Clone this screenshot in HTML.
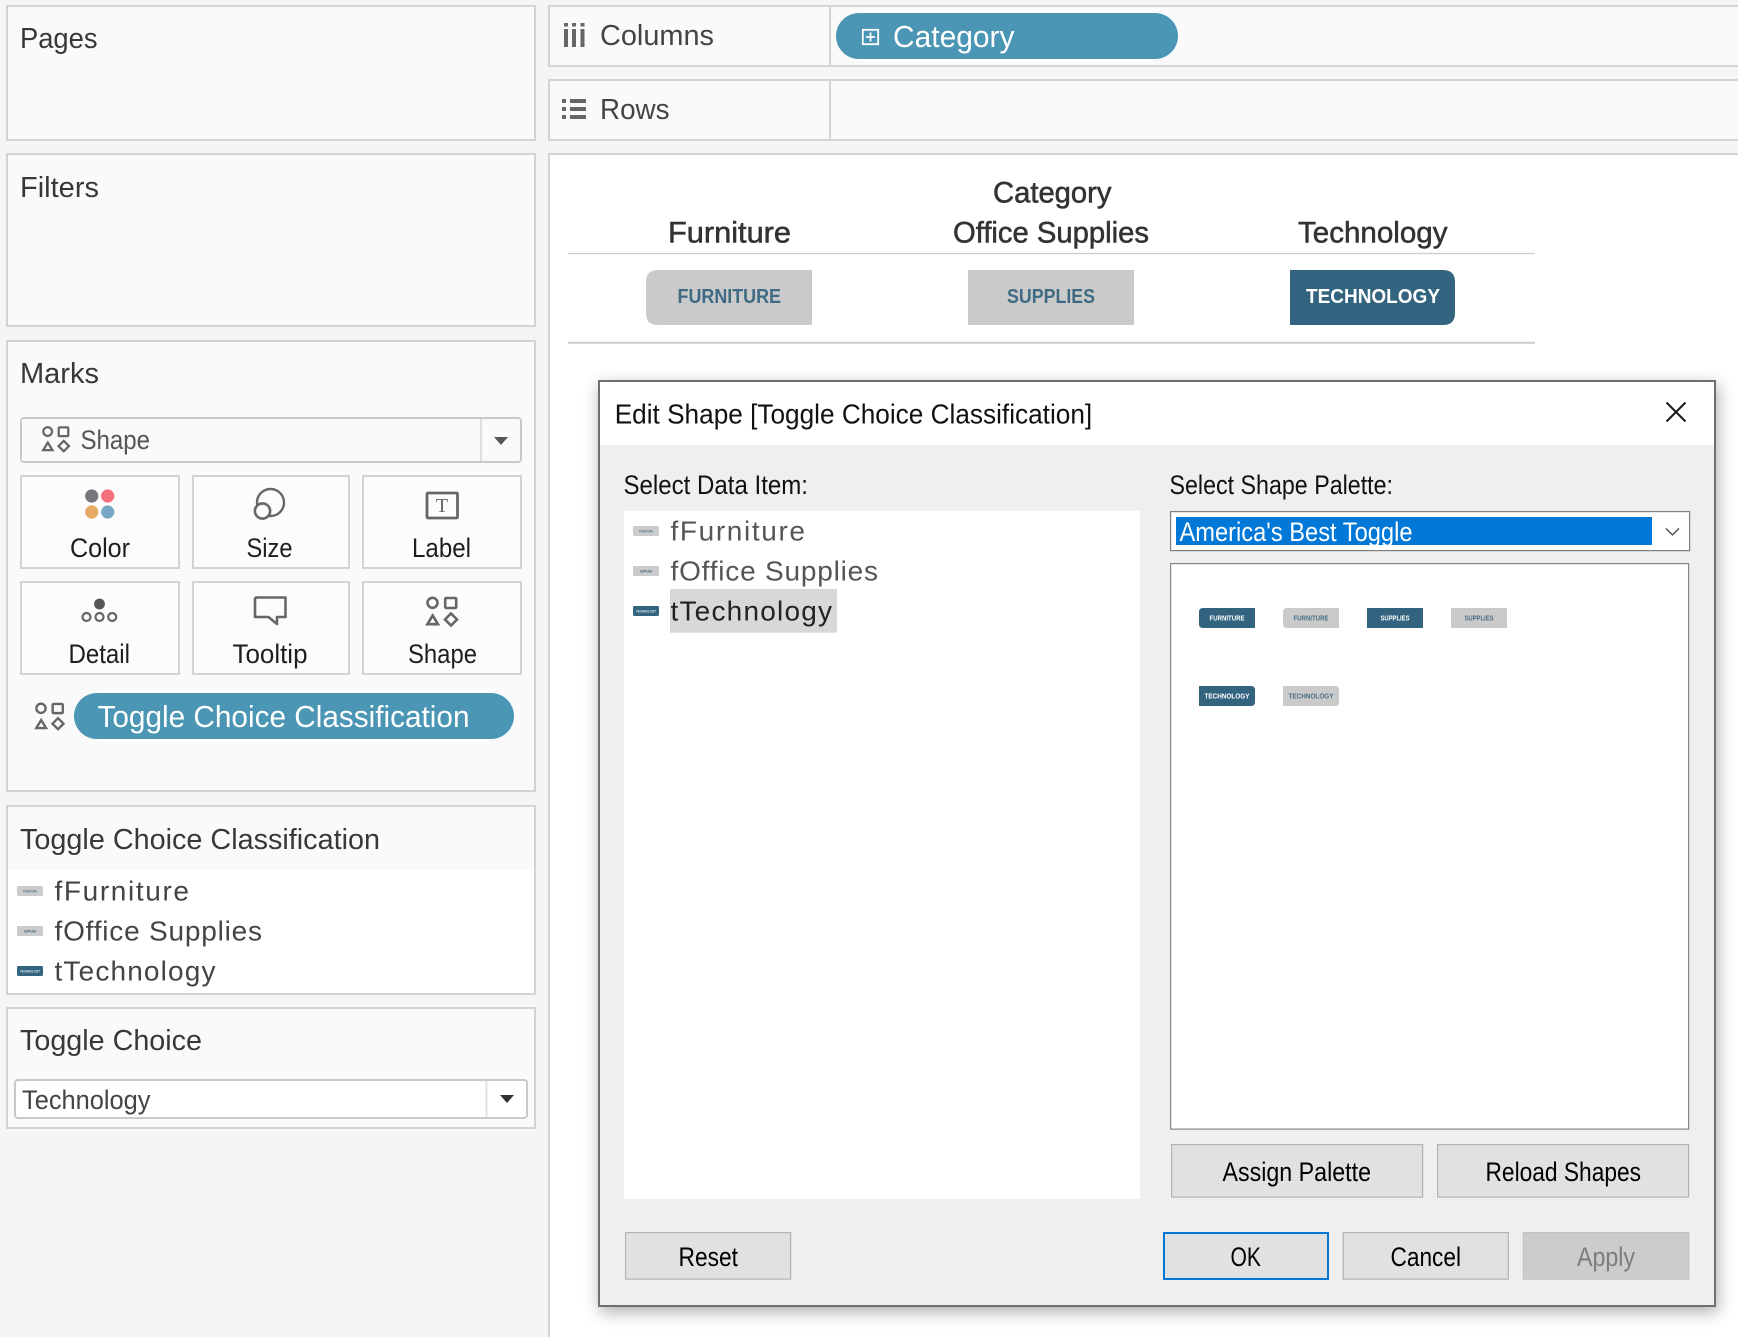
<!DOCTYPE html>
<html><head><meta charset="utf-8"><style>
html,body{margin:0;padding:0;background:#f5f5f5}
svg{display:block;font-family:"Liberation Sans",sans-serif}
text{white-space:pre}
</style></head><body>
<svg width="1738" height="1337" viewBox="0 0 1738 1337" xmlns="http://www.w3.org/2000/svg">
<defs>
<g id="shp" fill="none" stroke="#666" stroke-width="2.6">
<circle cx="6.5" cy="5.8" r="5"/><rect x="19.2" y="1" width="11" height="10" rx="1"/>
<path d="M6.7 18.5 L12 27.2 H1.4 Z" stroke-linejoin="miter"/><path d="M25 16.5 L31 22.5 L25 28.5 L19 22.5 Z"/>
</g>
</defs>
<rect width="1738" height="1337" fill="#f5f5f5"/>
<!-- left panels -->
<g fill="#fafafa" stroke="#d3d3d3" stroke-width="2">
<rect x="7" y="6" width="528" height="134"/>
<rect x="7" y="154" width="528" height="172"/>
<rect x="7" y="341" width="528" height="450"/>
<rect x="7" y="806" width="528" height="188"/>
<rect x="7" y="1008" width="528" height="120"/>
</g>
<rect x="8" y="870" width="526" height="123" fill="#fff"/>
<g fill="#383838" font-size="29">
<text x="20" y="48" textLength="77.5" lengthAdjust="spacingAndGlyphs">Pages</text>
<text x="20" y="197" textLength="79" lengthAdjust="spacingAndGlyphs">Filters</text>
<text x="20" y="383" textLength="79" lengthAdjust="spacingAndGlyphs">Marks</text>
<text x="20" y="849" textLength="360" lengthAdjust="spacingAndGlyphs">Toggle Choice Classification</text>
<text x="20" y="1050" textLength="182" lengthAdjust="spacingAndGlyphs">Toggle Choice</text>
</g>
<!-- marks dropdown -->
<rect x="21" y="418" width="500" height="44" rx="3" fill="#fafafa" stroke="#c9c9c9" stroke-width="2"/>
<path d="M481 419V461" stroke="#dedede" stroke-width="2"/>
<path d="M494 437H508L501 445Z" fill="#555"/>
<use href="#shp" transform="translate(42 426.5) scale(.87)"/>
<text x="80.5" y="449" font-size="27" fill="#555" textLength="69.5" lengthAdjust="spacingAndGlyphs">Shape</text>
<!-- marks buttons -->
<g fill="#fcfcfc" stroke="#d3d3d3" stroke-width="2">
<rect x="21" y="476" width="158" height="92"/><rect x="193" y="476" width="156" height="92"/><rect x="363" y="476" width="158" height="92"/>
<rect x="21" y="582" width="158" height="92"/><rect x="193" y="582" width="156" height="92"/><rect x="363" y="582" width="158" height="92"/>
</g>
<g fill="#1e1e1e" font-size="26.5">
<text x="70" y="557" textLength="60" lengthAdjust="spacingAndGlyphs">Color</text>
<text x="246.5" y="557" textLength="46" lengthAdjust="spacingAndGlyphs">Size</text>
<text x="412" y="557" textLength="59" lengthAdjust="spacingAndGlyphs">Label</text>
<text x="68.5" y="663" textLength="61.5" lengthAdjust="spacingAndGlyphs">Detail</text>
<text x="232.5" y="663" textLength="75" lengthAdjust="spacingAndGlyphs">Tooltip</text>
<text x="408" y="663" textLength="69" lengthAdjust="spacingAndGlyphs">Shape</text>
</g>
<!-- color icon -->
<circle cx="91.7" cy="496" r="6.6" fill="#77777b"/><circle cx="107.7" cy="496" r="6.6" fill="#f7707f"/>
<circle cx="91.7" cy="512" r="6.6" fill="#e8a865"/><circle cx="107.7" cy="512" r="6.6" fill="#78a8c8"/>
<!-- size icon -->
<circle cx="270.5" cy="502.5" r="13.5" fill="none" stroke="#666" stroke-width="2.4"/>
<circle cx="262.5" cy="511" r="7.6" fill="#fcfcfc" stroke="#666" stroke-width="2.6"/>
<!-- label icon -->
<rect x="427" y="493" width="30.5" height="25" rx="1" fill="none" stroke="#666" stroke-width="2.8"/>
<text x="442" y="512" text-anchor="middle" font-family="Liberation Serif,serif" font-size="20" fill="#666">T</text>
<!-- detail icon -->
<circle cx="99.5" cy="604" r="5.4" fill="#555"/>
<g fill="none" stroke="#666" stroke-width="2.2"><circle cx="86.5" cy="617" r="4"/><circle cx="99.5" cy="617" r="4"/><circle cx="112.2" cy="617" r="4"/></g>
<!-- tooltip icon -->
<path d="M256 597.5H285.5V617H277V624L268.5 617H255V598.5Z" fill="none" stroke="#666" stroke-width="2.6" stroke-linejoin="round"/>
<!-- shape icon -->
<use href="#shp" transform="translate(426 597)"/>
<!-- marks pill -->
<use href="#shp" transform="translate(35 703) scale(.92)"/>
<rect x="74" y="693" width="440" height="46" rx="23" fill="#4a96b4"/>
<text x="97.5" y="727" font-size="30.5" fill="#fff" textLength="372" lengthAdjust="spacingAndGlyphs">Toggle Choice Classification</text>
<!-- legend -->
<g font-size="4" font-weight="bold">
<rect x="17" y="886" width="26" height="10" rx="1.5" fill="#cbcbcb"/><text x="23" y="892.5" fill="#5d7d90" textLength="14" lengthAdjust="spacingAndGlyphs">FURNITURE</text>
<rect x="17" y="926" width="26" height="10" fill="#cbcbcb"/><text x="24" y="932.5" fill="#3a6078" textLength="12" lengthAdjust="spacingAndGlyphs">SUPPLIES</text>
<rect x="17" y="966" width="26" height="10" rx="1.5" fill="#33647f"/><text x="20" y="972.5" fill="#dfe8ee" textLength="20" lengthAdjust="spacingAndGlyphs">TECHNOLOGY</text>
</g>
<g fill="#444" font-size="28">
<text x="54.5" y="900.7" textLength="134.5" lengthAdjust="spacing">fFurniture</text>
<text x="54.5" y="940.7" textLength="207.5" lengthAdjust="spacing">fOffice Supplies</text>
<text x="54.5" y="980.7" textLength="161" lengthAdjust="spacing">tTechnology</text>
</g>
<!-- param dropdown -->
<rect x="15" y="1080" width="512" height="38" rx="3" fill="#fff" stroke="#c9c9c9" stroke-width="2"/>
<path d="M486.5 1081V1117" stroke="#e2e2e2" stroke-width="2"/>
<path d="M500 1095H514L507 1103Z" fill="#333"/>
<text x="22" y="1109" font-size="26.5" fill="#444" textLength="128.5" lengthAdjust="spacingAndGlyphs">Technology</text>
<!-- shelves -->
<rect x="549" y="6" width="1190" height="60" fill="#fafafa" stroke="#d3d3d3" stroke-width="2"/>
<rect x="549" y="80" width="1190" height="60" fill="#fafafa" stroke="#d3d3d3" stroke-width="2"/>
<path d="M830 6V66M830 80V140" stroke="#d3d3d3" stroke-width="2"/>
<g fill="#666">
<rect x="564" y="23" width="4" height="3.5"/><rect x="572" y="23" width="4" height="3.5"/><rect x="580.5" y="23" width="4" height="3.5"/>
<rect x="564" y="29" width="4" height="18"/><rect x="572" y="29" width="4" height="18"/><rect x="580.5" y="29" width="4" height="18"/>
<rect x="562" y="99" width="4" height="4"/><rect x="570" y="99" width="16" height="4"/>
<rect x="562" y="107" width="4" height="4"/><rect x="570" y="107" width="16" height="4"/>
<rect x="562" y="115" width="4" height="4"/><rect x="570" y="115" width="16" height="4"/>
</g>
<g fill="#444" font-size="29">
<text x="600" y="45" textLength="114" lengthAdjust="spacingAndGlyphs">Columns</text>
<text x="600" y="119" textLength="69.5" lengthAdjust="spacingAndGlyphs">Rows</text>
</g>
<rect x="836" y="13" width="342" height="46" rx="23" fill="#4a96b4"/>
<rect x="862.8" y="29.8" width="15.4" height="14.4" fill="none" stroke="#fff" stroke-width="1.8"/>
<path d="M870.5 32.5V41.5M866 37H875" stroke="#fff" stroke-width="1.8"/>
<text x="893" y="47" font-size="31" fill="#fff" textLength="121.5" lengthAdjust="spacingAndGlyphs">Category</text>
<!-- viz -->
<rect x="549" y="154" width="1190" height="1190" fill="#fff" stroke="#d3d3d3" stroke-width="2"/>
<g fill="#333" font-size="29.5" stroke="#333" stroke-width=".55">
<text x="993" y="202.7" textLength="118.5" lengthAdjust="spacingAndGlyphs">Category</text>
<text x="668" y="242.7" textLength="123" lengthAdjust="spacingAndGlyphs">Furniture</text>
<text x="953" y="242.7" textLength="196" lengthAdjust="spacingAndGlyphs">Office Supplies</text>
<text x="1298" y="242.7" textLength="149.5" lengthAdjust="spacingAndGlyphs">Technology</text>
</g>
<path d="M568 253.5H1535" stroke="#ccc" stroke-width="1.2"/>
<path d="M568 342.7H1535" stroke="#ccc" stroke-width="2"/>
<path d="M658 270H812V325H658Q646 325 646 313V282Q646 270 658 270Z" fill="#cacaca"/>
<rect x="968" y="270" width="166" height="55" fill="#cacaca"/>
<path d="M1290 270H1443Q1455 270 1455 282V313Q1455 325 1443 325H1290Z" fill="#33647f"/>
<g font-size="20" font-weight="bold">
<text x="677.5" y="303" fill="#3f6a84" textLength="103.5" lengthAdjust="spacingAndGlyphs">FURNITURE</text>
<text x="1007" y="303" fill="#3f6a84" textLength="88" lengthAdjust="spacingAndGlyphs">SUPPLIES</text>
<text x="1306" y="303" fill="#fff" textLength="134" lengthAdjust="spacingAndGlyphs">TECHNOLOGY</text>
</g>
<!-- dialog -->
<rect x="599" y="381" width="1116" height="925" fill="#efefef" stroke="#6f6f6f" stroke-width="2" style="filter:drop-shadow(2px 5px 8px rgba(0,0,0,.32))"/>
<rect x="600" y="382" width="1114" height="63" fill="#fff"/>
<text x="614.7" y="423.5" font-size="27.5" fill="#111" textLength="477.5" lengthAdjust="spacingAndGlyphs">Edit Shape [Toggle Choice Classification]</text>
<path d="M1666.5 402.5L1685.5 421.5M1685.5 402.5L1666.5 421.5" stroke="#1a1a1a" stroke-width="2"/>
<text x="623.5" y="494" font-size="26.5" fill="#111" textLength="184.5" lengthAdjust="spacingAndGlyphs">Select Data Item:</text>
<text x="1169.5" y="494" font-size="26.5" fill="#111" textLength="223.5" lengthAdjust="spacingAndGlyphs">Select Shape Palette:</text>
<rect x="624" y="511" width="516" height="688" fill="#fff"/>
<g font-size="4" font-weight="bold">
<rect x="633" y="526" width="26" height="10" rx="1.5" fill="#cbcbcb"/><text x="639" y="532.5" fill="#5d7d90" textLength="14" lengthAdjust="spacingAndGlyphs">FURNITURE</text>
<rect x="633" y="566" width="26" height="10" fill="#cbcbcb"/><text x="640" y="572.5" fill="#3a6078" textLength="12" lengthAdjust="spacingAndGlyphs">SUPPLIES</text>
<rect x="633" y="606" width="26" height="10" rx="1.5" fill="#33647f"/><text x="636" y="612.5" fill="#dfe8ee" textLength="20" lengthAdjust="spacingAndGlyphs">TECHNOLOGY</text>
</g>
<rect x="670" y="589" width="167" height="43.7" fill="#d8d8d8"/>
<g font-size="28">
<text x="670.5" y="540.7" fill="#555" textLength="134.5" lengthAdjust="spacing">fFurniture</text>
<text x="670.5" y="580.7" fill="#555" textLength="207.5" lengthAdjust="spacing">fOffice Supplies</text>
<text x="670.5" y="620.7" fill="#222" textLength="161.5" lengthAdjust="spacing">tTechnology</text>
</g>
<!-- palette combobox -->
<rect x="1170.6" y="511.6" width="519" height="39" fill="#fff" stroke="#7f7f7f" stroke-width="1.2"/>
<rect x="1176" y="517" width="476" height="28" fill="#0078d7"/>
<text x="1179.5" y="541" font-size="26.5" fill="#fff" textLength="233" lengthAdjust="spacingAndGlyphs">America's Best Toggle</text>
<path d="M1666 528.5L1672.5 535L1679 528.5" fill="none" stroke="#444" stroke-width="1.3"/>
<!-- palette box -->
<rect x="1170.6" y="563.6" width="518" height="565.5" fill="#fff" stroke="#858585" stroke-width="1.2"/>
<path d="M1203 608H1255V628H1203Q1199 628 1199 624V612Q1199 608 1203 608Z" fill="#33647f"/>
<path d="M1287 608H1339V628H1287Q1283 628 1283 624V612Q1283 608 1287 608Z" fill="#cacaca"/>
<rect x="1367" y="608" width="56" height="20" fill="#33647f"/>
<rect x="1451" y="608" width="56" height="20" fill="#cacaca"/>
<path d="M1199 686H1251Q1255 686 1255 690V702Q1255 706 1251 706H1199Z" fill="#33647f"/>
<path d="M1283 686H1335Q1339 686 1339 690V702Q1339 706 1335 706H1283Z" fill="#cacaca"/>
<g font-size="7" font-weight="bold">
<text x="1209.5" y="620.5" fill="#fff" textLength="35" lengthAdjust="spacingAndGlyphs">FURNITURE</text>
<text x="1293.5" y="620.5" fill="#4a7086" textLength="35" lengthAdjust="spacingAndGlyphs">FURNITURE</text>
<text x="1380.5" y="620.5" fill="#fff" textLength="29" lengthAdjust="spacingAndGlyphs">SUPPLIES</text>
<text x="1464.5" y="620.5" fill="#4a7086" textLength="29" lengthAdjust="spacingAndGlyphs">SUPPLIES</text>
<text x="1204.5" y="698.5" fill="#fff" textLength="45" lengthAdjust="spacingAndGlyphs">TECHNOLOGY</text>
<text x="1288.5" y="698.5" fill="#4a7086" textLength="45" lengthAdjust="spacingAndGlyphs">TECHNOLOGY</text>
</g>
<!-- dialog buttons -->
<g fill="#e1e1e1" stroke="#b2b2b2" stroke-width="1.2">
<rect x="1171.6" y="1144.6" width="251" height="52.5"/>
<rect x="1437.6" y="1144.6" width="251" height="52.5"/>
<rect x="625.6" y="1232.6" width="165" height="46.5"/>
<rect x="1343.3" y="1232.6" width="165" height="46.5"/>
</g>
<rect x="1523.3" y="1232.6" width="165.5" height="46.5" fill="#ccc" stroke="#c2c2c2" stroke-width="1.2"/>
<rect x="1164" y="1233" width="164" height="46" fill="#e1e1e1" stroke="#0078d7" stroke-width="2"/>
<g font-size="26.5" fill="#000">
<text x="1222.5" y="1181" textLength="148.5" lengthAdjust="spacingAndGlyphs">Assign Palette</text>
<text x="1485.5" y="1181" textLength="155.5" lengthAdjust="spacingAndGlyphs">Reload Shapes</text>
<text x="678.5" y="1266" textLength="59.5" lengthAdjust="spacingAndGlyphs">Reset</text>
<text x="1230.5" y="1266" textLength="30.5" lengthAdjust="spacingAndGlyphs">OK</text>
<text x="1390.5" y="1266" textLength="70.5" lengthAdjust="spacingAndGlyphs">Cancel</text>
<text x="1577" y="1266" fill="#7d7d7d" textLength="58" lengthAdjust="spacingAndGlyphs">Apply</text>
</g>
</svg>
</body></html>
